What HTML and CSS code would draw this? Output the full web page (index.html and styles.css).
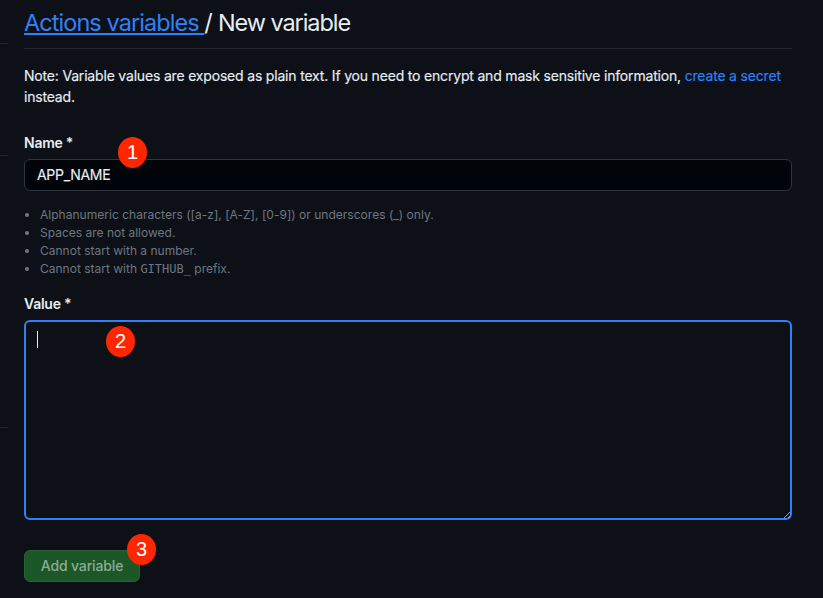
FILE: index.html
```html
<!DOCTYPE html>
<html lang="en">
<head>
<meta charset="utf-8">
<title>New variable</title>
<link rel="stylesheet" href="styles.css">
</head>
<body>
<aside class="rail"><i class="rail-a"></i><i class="rail-b"></i><i class="rail-c"></i></aside>
<main class="content">
  <h1 class="title"><a class="crumb" href="#">Actions variables&nbsp;</a><span class="slash">/</span> <span class="current">New variable</span></h1>
  <p class="note"><span class="note-text">Note: Variable values are exposed as plain text. If you need to encrypt and mask sensitive information,</span> <a class="link" href="#">create a secret</a><br>instead.</p>
  <form class="form">
    <label class="label" for="name">Name *</label>
    <div class="field">
      <input class="input" id="name" value="APP_NAME">
      <span class="badge badge-1">1</span>
    </div>
    <ul class="hints">
      <li class="hint-wide">Alphanumeric characters ([a-z], [A-Z], [0-9]) or underscores (_) only.</li>
      <li>Spaces are not allowed.</li>
      <li>Cannot start with a number.</li>
      <li>Cannot start with <code>GITHUB_</code> prefix.</li>
    </ul>
    <label class="label label-value" for="value">Value *</label>
    <div class="field">
      <textarea class="textarea" id="value"></textarea>
      <span class="caret"></span>
      <span class="badge badge-2">2</span>
      <svg class="grip" width="8" height="8" viewBox="0 0 8 8"><path d="M1 7L7 1M5 7L7 5" stroke="#c9cdd2" stroke-width=".8" fill="none"/></svg>
    </div>
    <div class="actions">
      <button class="button" type="button">Add variable</button>
      <span class="badge badge-3">3</span>
    </div>
  </form>
</main>
</body>
</html>
```
FILE: styles.css
```css
* { box-sizing: border-box; }
body {
  margin: 0;
  width: 823px;
  height: 598px;
  overflow: hidden;
  display: flex;
  background: #0d1117;
  color: #e6edf3;
  font: 14px/21px Inter, "Liberation Sans", sans-serif;
}
.rail { width: 8px; margin-right: 16px; flex: none; display: flex; flex-direction: column; }
.rail i { height: 1px; background: #21262d; }
.rail-a { margin-top: 43px; }
.rail-b { margin-top: 111px; }
.rail-c { margin-top: 271px; }
.content { width: 768px; }
.title {
  margin: 0;
  height: 49px;
  padding-top: 5px;
  border-bottom: 1px solid #21262d;
  font-size: 23.5px;
  line-height: 36px;
  font-weight: 400;
  letter-spacing: -0.94px;
  white-space: nowrap;
}
.current { letter-spacing: -1.08px; margin-left: 0.5px; }
.crumb {
  color: #2f81f7;
  text-decoration: underline;
  text-decoration-thickness: 2px;
  text-underline-offset: 2px;
  text-decoration-skip-ink: none;
}
.note { margin: 16px 0 0; white-space: nowrap; letter-spacing: -0.184px; -webkit-text-stroke: 0.15px; }
.link { color: #2f81f7; text-decoration: none; }
.form { margin: 0; }
.label { display: block; margin-top: 25px; font-weight: 600; letter-spacing: -0.25px; }
.field { position: relative; }
.input {
  display: block;
  width: 768px;
  height: 32px;
  margin: 6px 0 0;
  padding: 0 12px 1px;
  border: 1px solid #30363d;
  border-radius: 6px;
  background: #010409;
  color: #e6edf3;
  font: inherit;
  letter-spacing: -0.3px;
  outline: none;
  -webkit-text-stroke: 0.15px;
}
.hints {
  margin: 15px 0 0;
  padding-left: 16px;
  color: #6e7681;
  font-size: 12px;
  line-height: 18px;
}
.hint-wide { letter-spacing: 0.02px; }
.hints code { font: 12px/12px "DejaVu Sans Mono", monospace; }
.label-value { margin-top: 15px; }
.textarea {
  display: block;
  width: 768px;
  height: 200px;
  margin: 6px 0 0;
  border: 2px solid #2f81f7;
  border-radius: 6px;
  background: #0d1117;
  color: #e6edf3;
  outline: none;
  resize: none;
}
.caret { position: absolute; left: 13px; top: 11px; width: 1px; height: 17px; background: #e6edf3; }
.grip { position: absolute; right: 1px; bottom: 1px; }
.badge {
  position: absolute;
  width: 29px;
  height: 31px;
  border-radius: 50%;
  background: #ff2600;
  color: #fff;
  font: 20px/31px "Liberation Sans", sans-serif;
  text-align: center;
}
.badge-1 { left: 94px; top: -22px; }
.badge-2 { left: 82px; top: 6px; }
.badge-3 { left: 103px; top: -16px; }
.actions { position: relative; margin-top: 30px; }
.button {
  display: block;
  width: 116px;
  height: 32px;
  padding: 0;
  border: 1px solid #2a6137;
  border-radius: 6px;
  background: #1b5727;
  color: #8eab93;
  font: 500 14px/20px Inter, sans-serif;
  letter-spacing: -0.15px;
}
```
